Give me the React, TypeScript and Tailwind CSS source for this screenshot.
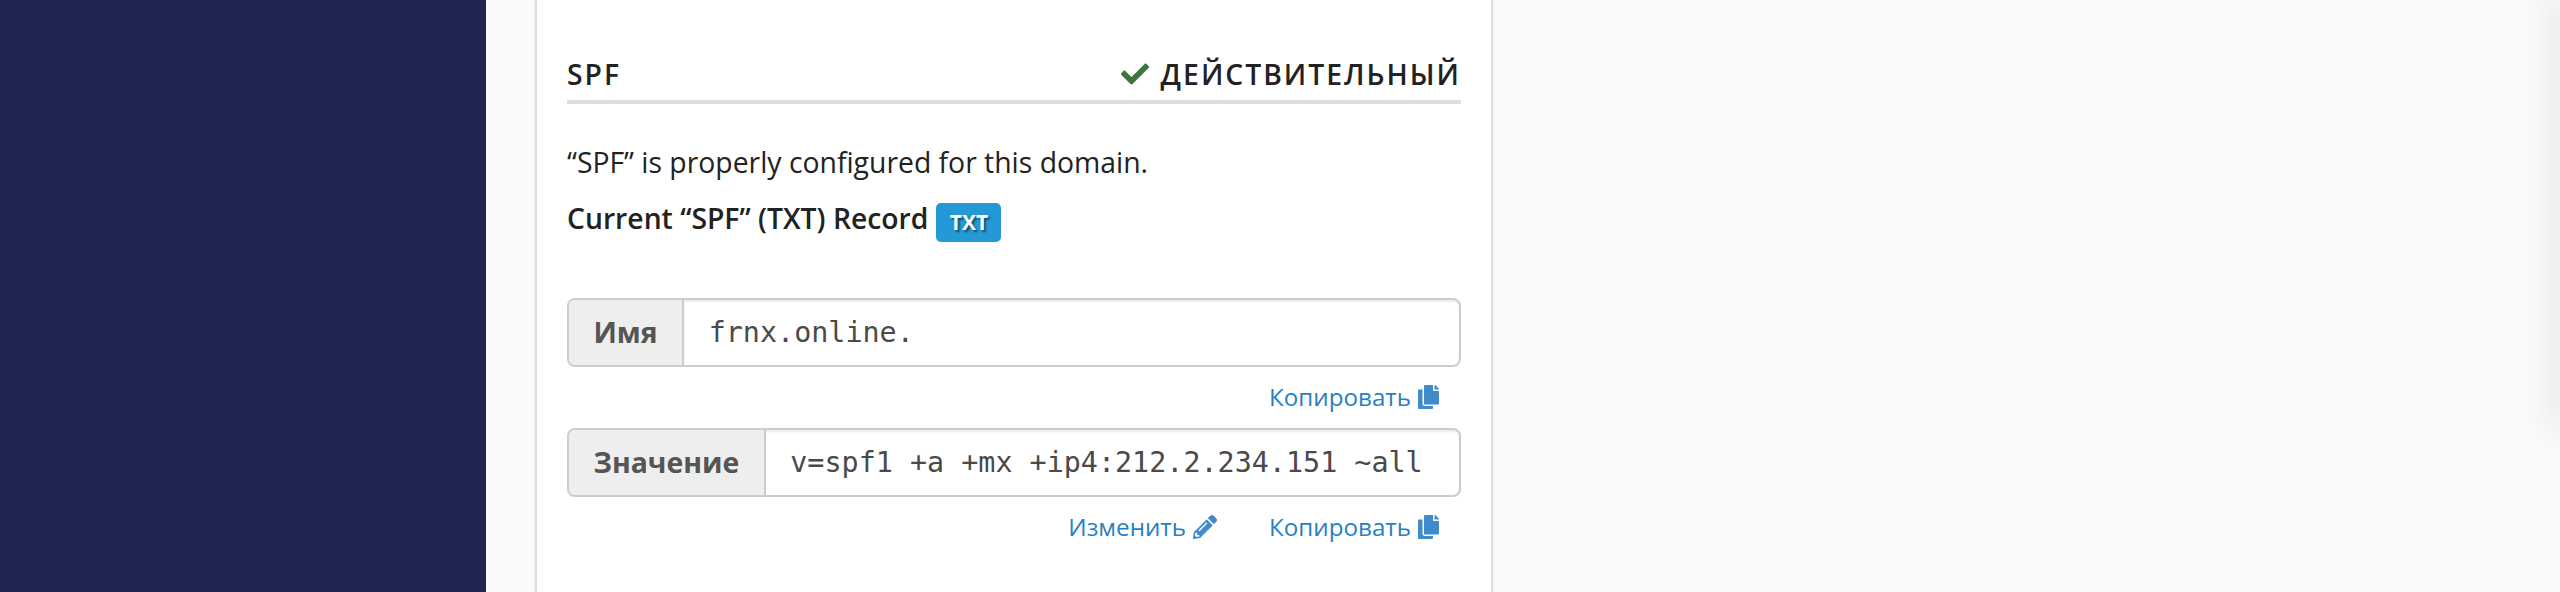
import { FaCheck, FaCopy, FaPencilAlt } from "react-icons/fa";

interface recordFieldProps {
  label: string;
  value: string;
}

// Label addon joined to a read only value box
const RecordField = ({ label, value }: recordFieldProps) => {
  return (
    <div className="flex h-[69px] rounded-[8px] border-2 border-[#cccccc] bg-white overflow-hidden">
      <div className="flex items-center border-r-2 border-[#cccccc] bg-[#eeeeee] px-[24.5px] text-[28.4px] font-bold text-[#555555]">
        {label}
      </div>
      <div className="flex grow items-center pl-[24.5px] pt-px font-['DejaVu_Sans_Mono',monospace] text-[28.4px] text-[#4a4a4a] whitespace-pre shadow-[inset_0_2px_2px_rgba(0,0,0,0.075)]">
        {value}
      </div>
    </div>
  );
};

const CopyLink = () => {
  return (
    <a className="flex items-center gap-[7px] text-[#2a7fc1]">
      Копировать
      <FaCopy className="h-6 w-[21px] text-[#428bca]" />
    </a>
  );
};

// SPF section of the email deliverability page
const App = () => {
  return (
    <div className="flex h-[592px] w-full overflow-hidden bg-[#fafafa] font-['Open_Sans',sans-serif] text-[#222222]">
      <div className="w-[486px] shrink-0 bg-[#1f2651]" />
      <div className="ml-[49px] w-[958px] shrink-0 border-x-2 border-[#dddddd] bg-white px-[30px] pt-[49px] shadow-[0_0_3px_rgba(0,0,0,0.08)]">
        <div className="flex h-[55px] items-start justify-between border-b-4 border-[#dddddd] text-[28.3px] leading-[50px] font-semibold tracking-[2px]">
          <span>SPF</span>
          <span className="flex h-[50px] items-center gap-[12px]">
            <FaCheck className="size-7 text-[#3c763d]" />
            ДЕЙСТВИТЕЛЬНЫЙ
          </span>
        </div>
        <p className="mt-[38px] text-[28.35px] leading-[40px]">
          “SPF” is properly configured for this domain.
        </p>
        <div className="mt-[16px] flex h-[44px] items-start gap-[8px] text-[28.3px] leading-[40px] font-semibold">
          Current “SPF” (TXT) Record
          <span className="mt-[5px] flex h-[39px] w-[65px] items-center justify-center rounded-[5px] bg-[#2499d5] pb-[2px] text-[21px] font-bold text-white text-shadow-[2px_2px_2px_rgba(0,0,0,0.5)]">
            TXT
          </span>
        </div>
        <div className="mt-[56px]">
          <RecordField label="Имя" value="frnx.online." />
        </div>
        <div className="flex h-[61px] items-center justify-end pr-[22px] text-[24.2px]">
          <CopyLink />
        </div>
        <RecordField label="Значение" value="v=spf1 +a +mx +ip4:212.2.234.151 ~all" />
        <div className="flex h-[61px] items-center justify-end gap-[52px] pr-[22px] text-[24.2px]">
          <a className="flex items-center gap-[7px] text-[#2a7fc1]">
            Изменить
            <FaPencilAlt className="size-6 text-[#428bca]" />
          </a>
          <CopyLink />
        </div>
      </div>
      {/* Soft shadow of the panel that sits past the right edge */}
      <div className="ml-auto h-[424px] w-px translate-x-px shadow-[0_0_32px_6px_rgba(0,0,0,0.13)]" />
    </div>
  );
};

export default App;
